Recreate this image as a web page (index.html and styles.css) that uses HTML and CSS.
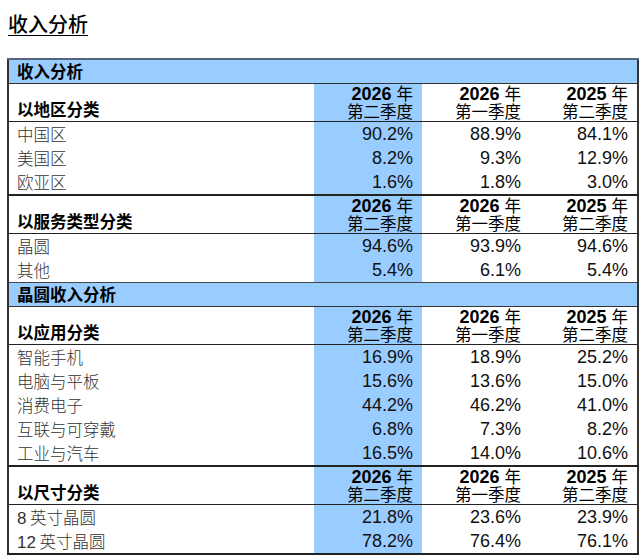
FILE: index.html
```html
<!DOCTYPE html>
<html lang="zh-CN">
<head>
<meta charset="utf-8">
<title>收入分析</title>
<link rel="stylesheet" href="styles.css">
</head>
<body>
<h1 class="title">收入分析</h1>
<table class="rev">
  <colgroup>
    <col class="c-label"><col class="c-num"><col class="c-num"><col class="c-num">
  </colgroup>
  <tbody>
    <tr class="band"><td colspan="4"><div class="bt">收入分析</div></td></tr>
    <tr class="head">
      <td class="lab"><div class="lt">以地区分类</div></td>
      <td class="num hl"><div class="l1"><span class="b">2026</span> <span class="cj">年</span></div><div class="l2">第二季度</div></td>
      <td class="num"><div class="l1"><span class="b">2026</span> <span class="cj">年</span></div><div class="l2">第一季度</div></td>
      <td class="num"><div class="l1"><span class="b">2025</span> <span class="cj">年</span></div><div class="l2">第二季度</div></td>
    </tr>
    <tr class="row"><td class="name"><div class="c">中国区</div></td><td class="val hl"><div class="c">90.2%</div></td><td class="val"><div class="c">88.9%</div></td><td class="val"><div class="c">84.1%</div></td></tr>
    <tr class="row"><td class="name"><div class="c">美国区</div></td><td class="val hl"><div class="c">8.2%</div></td><td class="val"><div class="c">9.3%</div></td><td class="val"><div class="c">12.9%</div></td></tr>
    <tr class="row last"><td class="name"><div class="c">欧亚区</div></td><td class="val hl"><div class="c">1.6%</div></td><td class="val"><div class="c">1.8%</div></td><td class="val"><div class="c">3.0%</div></td></tr>
    <tr class="head">
      <td class="lab"><div class="lt">以服务类型分类</div></td>
      <td class="num hl"><div class="l1"><span class="b">2026</span> <span class="cj">年</span></div><div class="l2">第二季度</div></td>
      <td class="num"><div class="l1"><span class="b">2026</span> <span class="cj">年</span></div><div class="l2">第一季度</div></td>
      <td class="num"><div class="l1"><span class="b">2025</span> <span class="cj">年</span></div><div class="l2">第二季度</div></td>
    </tr>
    <tr class="row"><td class="name"><div class="c">晶圆</div></td><td class="val hl"><div class="c">94.6%</div></td><td class="val"><div class="c">93.9%</div></td><td class="val"><div class="c">94.6%</div></td></tr>
    <tr class="row"><td class="name"><div class="c">其他</div></td><td class="val hl"><div class="c">5.4%</div></td><td class="val"><div class="c">6.1%</div></td><td class="val"><div class="c">5.4%</div></td></tr>
    <tr class="band"><td colspan="4"><div class="bt">晶圆收入分析</div></td></tr>
    <tr class="head">
      <td class="lab"><div class="lt">以应用分类</div></td>
      <td class="num hl"><div class="l1"><span class="b">2026</span> <span class="cj">年</span></div><div class="l2">第二季度</div></td>
      <td class="num"><div class="l1"><span class="b">2026</span> <span class="cj">年</span></div><div class="l2">第一季度</div></td>
      <td class="num"><div class="l1"><span class="b">2025</span> <span class="cj">年</span></div><div class="l2">第二季度</div></td>
    </tr>
    <tr class="row"><td class="name"><div class="c">智能手机</div></td><td class="val hl"><div class="c">16.9%</div></td><td class="val"><div class="c">18.9%</div></td><td class="val"><div class="c">25.2%</div></td></tr>
    <tr class="row"><td class="name"><div class="c">电脑与平板</div></td><td class="val hl"><div class="c">15.6%</div></td><td class="val"><div class="c">13.6%</div></td><td class="val"><div class="c">15.0%</div></td></tr>
    <tr class="row"><td class="name"><div class="c">消费电子</div></td><td class="val hl"><div class="c">44.2%</div></td><td class="val"><div class="c">46.2%</div></td><td class="val"><div class="c">41.0%</div></td></tr>
    <tr class="row"><td class="name"><div class="c">互联与可穿戴</div></td><td class="val hl"><div class="c">6.8%</div></td><td class="val"><div class="c">7.3%</div></td><td class="val"><div class="c">8.2%</div></td></tr>
    <tr class="row last"><td class="name"><div class="c">工业与汽车</div></td><td class="val hl"><div class="c">16.5%</div></td><td class="val"><div class="c">14.0%</div></td><td class="val"><div class="c">10.6%</div></td></tr>
    <tr class="head">
      <td class="lab"><div class="lt">以尺寸分类</div></td>
      <td class="num hl"><div class="l1"><span class="b">2026</span> <span class="cj">年</span></div><div class="l2">第二季度</div></td>
      <td class="num"><div class="l1"><span class="b">2026</span> <span class="cj">年</span></div><div class="l2">第一季度</div></td>
      <td class="num"><div class="l1"><span class="b">2025</span> <span class="cj">年</span></div><div class="l2">第二季度</div></td>
    </tr>
    <tr class="row"><td class="name"><div class="c"><span class="dg">8</span> 英寸晶圆</div></td><td class="val hl"><div class="c">21.8%</div></td><td class="val"><div class="c">23.6%</div></td><td class="val"><div class="c">23.9%</div></td></tr>
    <tr class="row"><td class="name"><div class="c"><span class="dg">12</span> 英寸晶圆</div></td><td class="val hl"><div class="c">78.2%</div></td><td class="val"><div class="c">76.4%</div></td><td class="val"><div class="c">76.1%</div></td></tr>
  </tbody>
</table>
</body>
</html>
```

FILE: styles.css
```css
html, body {
  margin: 0;
  padding: 0;
  background: #ffffff;
}
body {
  padding: 0 0 0 8px;
  font-family: "Noto Sans CJK SC", "Liberation Sans", sans-serif;
  color: #000;
}
.title {
  margin: 0;
  padding-top: 11px;
  font-size: 20px;
  line-height: 26px;
  font-weight: 500;
  text-decoration: underline;
  text-underline-offset: 3px;
  text-decoration-thickness: 1px;
  height: 47px;
}
.rev {
  margin-left: -1px;
  width: 631px;
  border-collapse: collapse;
  table-layout: fixed;
  border-left: 2px solid #333;
  border-right: 2px solid #333;
  border-bottom: 2px solid #222;
}
.c-label { width: 306px; }
.c-num { width: 108px; }
.rev td {
  padding: 0;
}
.band td {
  background: #99ccff;
  padding-left: 8px;
  border-top: 1px solid #444;
  border-bottom: 1px solid #333;
}
.band:first-child td {
  border-top: 2px solid #55657a;
}
.bt {
  height: 23px;
  font-size: 16.5px;
  font-weight: 700;
  line-height: 23px;
  overflow: hidden;
}
.head td {
  vertical-align: bottom;
  border-bottom: 1px solid #222;
}
.head .lab {
  padding-left: 8px;
}
.lt {
  height: 22px;
  font-size: 16.5px;
  font-weight: 700;
  line-height: 20px;
  overflow: visible;
}
.head .num {
  text-align: right;
  padding-right: 9px;
}
.l1, .l2 {
  white-space: nowrap;
}
.l1 {
  height: 18px;
  line-height: 18px;
  font-family: "Liberation Sans", sans-serif;
  font-size: 18px;
}
.l2 {
  height: 19px;
  line-height: 19px;
  font-family: "Noto Sans CJK SC", sans-serif;
  font-size: 16.5px;
}
.b { font-weight: 700; }
.cj {
  font-family: "Noto Sans CJK SC", sans-serif;
  font-size: 16.5px;
  font-weight: 400;
}
.row td {
  vertical-align: middle;
}
.c {
  height: 24px;
  line-height: 24px;
  white-space: nowrap;
}
.row.last td {
  border-bottom: 2px solid #222;
}
.name {
  padding-left: 8px !important;
  font-size: 16.5px;
  color: #333;
  font-weight: 300;
}
.dg {
  font-family: "Liberation Sans", sans-serif;
  font-size: 17px;
}
.val {
  text-align: right;
  padding-right: 9px !important;
  font-family: "Liberation Sans", sans-serif;
  font-size: 18px;
  color: #111;
}
.hl {
  background: #99ccff;
}
```
